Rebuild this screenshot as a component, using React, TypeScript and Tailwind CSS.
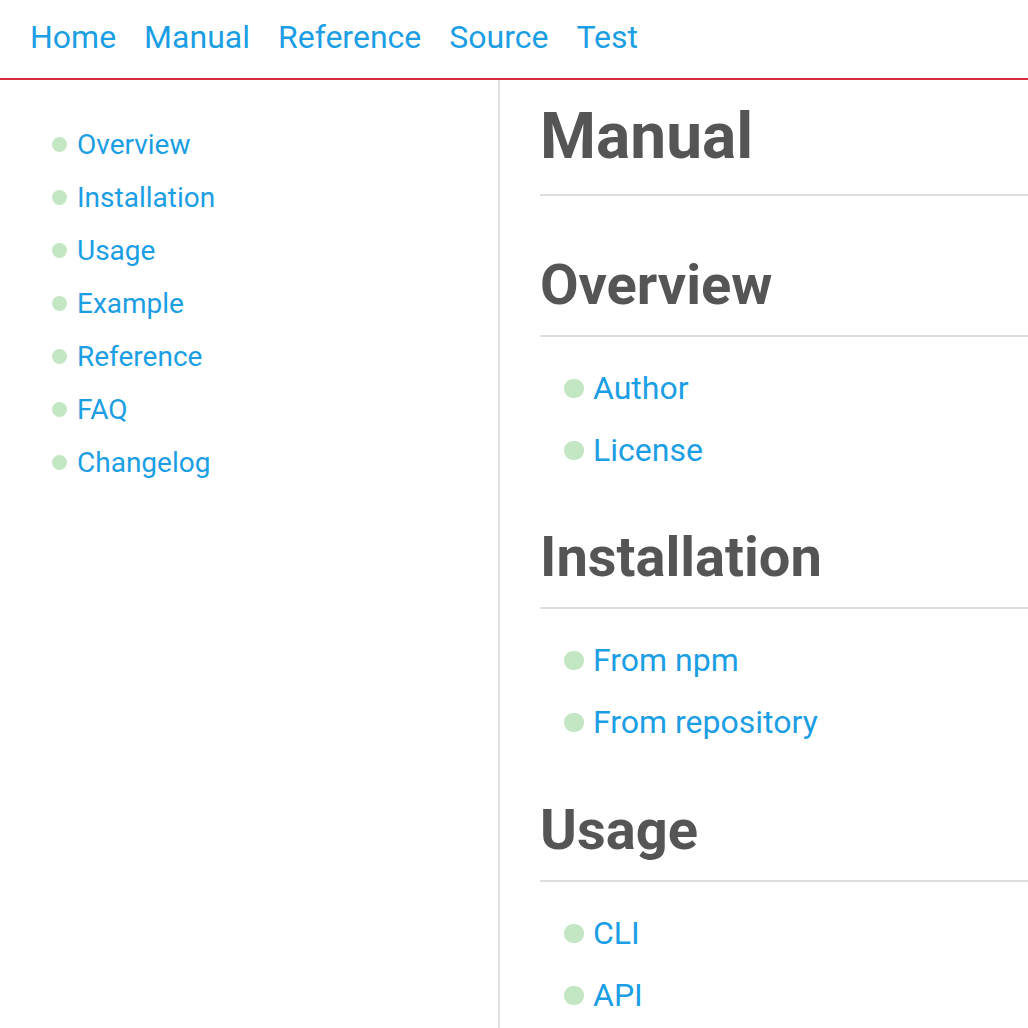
import React from "react";

const navItems = ["Home", "Manual", "Reference", "Source", "Test"];
const sideItems = ["Overview", "Installation", "Usage", "Example", "Reference", "FAQ", "Changelog"];

const sections: { title: string; items: string[]; mt: string }[] = [
  { title: "Overview", items: ["Author", "License"], mt: "mt-[56px]" },
  { title: "Installation", items: ["From npm", "From repository"], mt: "mt-[43px]" },
  { title: "Usage", items: ["CLI", "API"], mt: "mt-[44px]" },
];

export default function App() {
  return (
    <div className="min-h-[1028px] h-[1028px] overflow-hidden bg-white font-['Roboto',sans-serif] flex flex-col">
      <header className="h-[80px] shrink-0 border-b-2 border-[#d72c3c] flex items-center pl-[30px] pb-[4px] gap-[28px]">
        {navItems.map((n) => (
          <a key={n} className="text-[32px] text-[#1b9ee3] leading-none">
            {n}
          </a>
        ))}
      </header>
      <div className="flex flex-1">
        <aside className="w-[500px] shrink-0 border-r-2 border-[#e0e0e0] pt-[38px] pl-[52px]">
          <ul className="flex flex-col">
            {sideItems.map((s) => (
              <li key={s} className="h-[53px] flex items-center gap-[10px]">
                <span className="w-[15px] h-[15px] rounded-full bg-[#c3e6c3] shrink-0" />
                <a className="text-[28px] text-[#1b9ee3] leading-none">{s}</a>
              </li>
            ))}
          </ul>
        </aside>
        <main className="flex-1 pl-[40px] pt-[18px]">
          <h1 className="text-[64px] font-bold leading-[77px] pb-[19px] border-b-2 border-[#dddddd] text-[#555555]">
            Manual
          </h1>
          {sections.map((sec) => (
            <section key={sec.title}>
              <h2
                className={`${sec.mt} text-[56px] font-bold leading-[67px] pb-[16px] border-b-2 border-[#dddddd] text-[#555555]`}
              >
                {sec.title}
              </h2>
              <ul className="mt-[20px] pl-[24px] flex flex-col">
                {sec.items.map((it) => (
                  <li key={it} className="h-[62px] flex items-center gap-[9px]">
                    <span className="w-[20px] h-[19px] rounded-[9px] bg-[#c3e6c3] shrink-0" />
                    <a className="text-[32px] text-[#1b9ee3] leading-none">{it}</a>
                  </li>
                ))}
              </ul>
            </section>
          ))}
        </main>
      </div>
    </div>
  );
}
